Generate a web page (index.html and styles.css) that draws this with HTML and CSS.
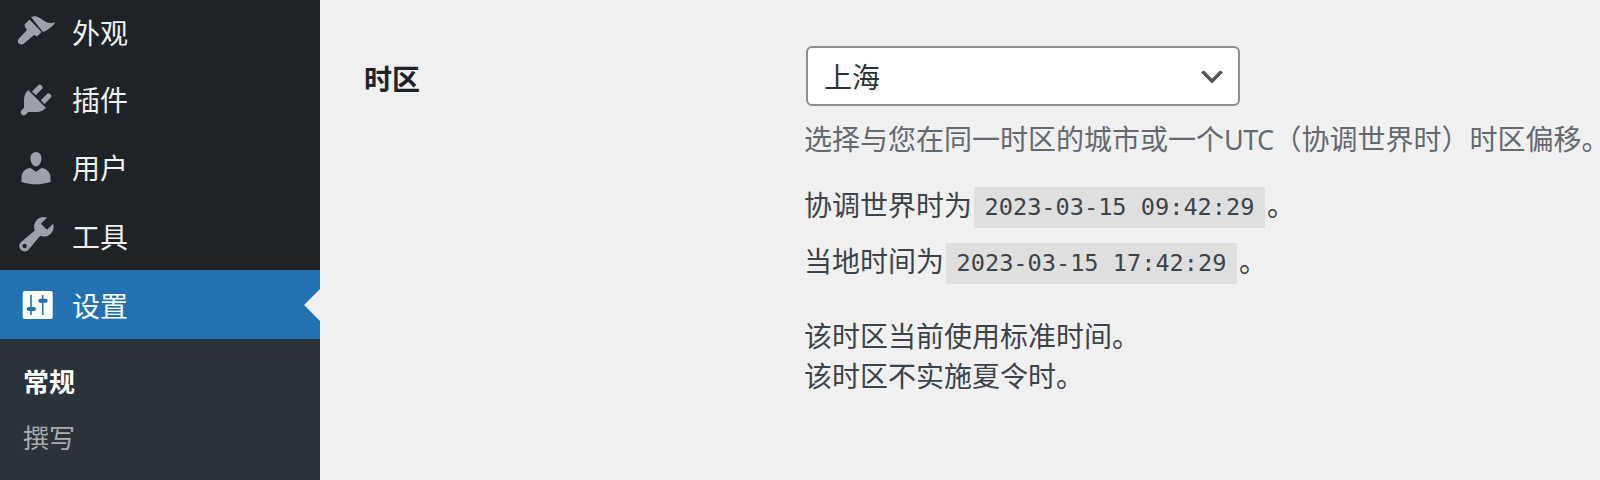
FILE: index.html
```html
<!DOCTYPE html>
<html lang="zh-CN">

<head>
    <meta charset="UTF-8">
    <title>常规设置</title>
    <link rel="stylesheet" href="styles.css">
</head>

<body>
    <div class="wrap">
        <nav class="sidebar">
            <ul class="menu">
                <li class="menu-item">
                    <svg class="menu-icon" viewBox="0 0 40 40"><path d="M15 4L19 3C22 3.6 24.5 5.6 27 7C29.5 8.6 31.500 10 34 10C36 10 38 9.700 39.500 9C38 11.500 36 13.500 34 15C32 16.500 29.500 18 27 19Z"/><path d="M13.500 6.500L25.500 19L21 23.500L18 22L8 30.500C6.500 31.800 4.500 31.800 3 30.700C1.500 29.500 1.400 27.400 2.600 26L11 17L9 14L8.500 11.500Z"/></svg>
                    <span>外观</span>
                </li>
                <li class="menu-item">
                    <svg class="menu-icon" viewBox="0 0 20 20"><path d="M13.11 4.36L9.87 7.6 8 5.73l3.24-3.24c.35-.34 1.05-.2 1.56.32.52.51.66 1.21.31 1.55zm-8 1.77l.91-1.12 9.01 9.01-1.19.84c-.71.71-2.63 1.16-3.82 1.16H6.14L4.9 17.26c-.59.59-1.54.59-2.12 0-.59-.58-.59-1.53 0-2.12l1.24-1.24v-3.88c0-1.13.4-3.19 1.09-3.89zm7.26 3.97l3.24-3.24c.34-.35 1.04-.21 1.55.31.52.51.66 1.21.31 1.55l-3.24 3.25z"/></svg>
                    <span>插件</span>
                </li>
                <li class="menu-item">
                    <svg class="menu-icon" viewBox="0 0 20 20"><path d="M10 9.25c-2.27 0-2.73-3.44-2.73-3.44C7 4.02 7.82 2 9.97 2c2.16 0 2.98 2.02 2.71 3.81 0 0-.41 3.44-2.68 3.44zm0 2.57L12.72 10c2.39 0 4.52 2.33 4.52 4.53v2.49s-3.65 1.13-7.24 1.13c-3.65 0-7.24-1.13-7.24-1.13v-2.49c0-2.25 1.94-4.48 4.47-4.48z"/></svg>
                    <span>用户</span>
                </li>
                <li class="menu-item">
                    <svg class="menu-icon" viewBox="0.5 1.54 18.6 18.6"><path d="M16.68 9.77c-1.34 1.34-3.3 1.67-4.95.99l-5.41 6.52c-.99.99-2.59.99-3.58 0s-.99-2.59 0-3.57l6.52-5.42c-.68-1.65-.35-3.61.99-4.95 1.28-1.28 3.12-1.62 4.72-1.06l-2.89 2.89 2.82 2.82 2.86-2.87c.53 1.58.18 3.39-1.08 4.65zM3.81 16.21c.4.39 1.04.39 1.43 0 .4-.4.4-1.04 0-1.43-.39-.4-1.03-.4-1.43 0-.39.39-.39 1.03 0 1.43z"/></svg>
                    <span>工具</span>
                </li>
                <li class="menu-item active">
                    <svg class="menu-icon" viewBox="0 0 40 40">
                        <rect class="icon-plate" x="6.700" y="6" width="30" height="28" rx="2"/>
                        <rect class="icon-slider" x="14.200" y="10" width="1.600" height="20"/>
                        <rect class="icon-slider" x="25.900" y="10" width="1.600" height="20"/>
                        <rect class="icon-slider" x="10.700" y="22" width="9.400" height="4" rx="2"/>
                        <rect class="icon-slider" x="22.300" y="13.700" width="9.400" height="4" rx="2"/>
                    </svg>
                    <span>设置</span>
                </li>
            </ul>
            <ul class="submenu">
                <li class="current">常规</li>
                <li>撰写</li>
            </ul>
        </nav>

        <main class="content">
            <div class="field-label">时区</div>
            <div class="field">
                <select class="tz-select">
                    <option>上海</option>
                </select>
                <p class="description">选择与您在同一时区的城市或一个<span class="latin">UTC</span>（协调世界时）时区偏移。</p>
                <p class="time-line">协调世界时为<code>2023-03-15 09:42:29</code>。</p>
                <p class="time-line">当地时间为<code>2023-03-15 17:42:29</code>。</p>
                <p class="note">该时区当前使用标准时间。<br>该时区不实施夏令时。</p>
            </div>
        </main>
    </div>
</body>

</html>
```

FILE: styles.css
```css
* {
    box-sizing: border-box;
}

html,
body {
    margin: 0;
    height: 100%;
    overflow: hidden;
}

body {
    background-color: #f0f0f1;
    color: #3c434a;
    font-family: "Noto Sans CJK SC", "Noto Sans", sans-serif;
    font-size: 28px;
}

ul {
    list-style: none;
    margin: 0;
    padding: 0;
}

p {
    margin: 0;
}

.wrap {
    display: flex;
    height: 480px;
}

.sidebar {
    width: 320px;
    flex-shrink: 0;
    background-color: #2c3338;
}

.menu {
    background-color: #1d2327;
}

.menu-item {
    display: flex;
    align-items: center;
    height: 68px;
    padding-left: 16px;
    color: #f0f0f1;
    line-height: 1;
}

.menu-item:first-child {
    height: 66px;
}

.menu-item span {
    margin-top: -2px;
}

.menu-item:nth-child(n+4) span {
    margin-top: 0;
}

.menu-icon {
    width: 40px;
    height: 40px;
    margin-right: 16px;
    fill: #9ca2a7;
}

.menu-item.active {
    position: relative;
    height: 69px;
    background-color: #2271b1;
    color: #fff;
}

.icon-plate {
    fill: #fff;
}

.icon-slider {
    fill: #2271b1;
}

.menu-item.active::after {
    content: "";
    position: absolute;
    right: 0;
    top: 50%;
    margin-top: -16px;
    border: 16px solid transparent;
    border-left-width: 0;
    border-right-color: #f0f0f1;
}

.submenu {
    padding-top: 14px;
    padding-left: 23px;
    font-size: 26px;
    line-height: 56px;
    color: #a9adb1;
}

.submenu .current {
    color: #fff;
    font-weight: 700;
}

.content {
    display: flex;
    flex: 1;
    padding-top: 46px;
    padding-left: 44px;
}

.field-label {
    width: 440px;
    padding-top: 12px;
    font-weight: 700;
    color: #1d2327;
    line-height: 40px;
}

.tz-select {
    display: block;
    width: 434px;
    height: 60px;
    margin-left: 2px;
    padding: 0 48px 0 16px;
    border: 2px solid #8c8f94;
    border-radius: 6px;
    color: #2c3338;
    font-family: inherit;
    font-size: 28px;
    appearance: none;
    background: #fff url("data:image/svg+xml;charset=US-ASCII,%3Csvg%20width%3D%2220%22%20height%3D%2220%22%20xmlns%3D%22http%3A%2F%2Fwww.w3.org%2F2000%2Fsvg%22%3E%3Cpath%20d%3D%22M5%206l5%205%205-5%202%201-7%207-7-7%202-1z%22%20fill%3D%22%23555%22%2F%3E%3C%2Fsvg%3E") no-repeat right 10px top 55%;
    background-size: 32px 32px;
}

.description {
    margin-top: 10px;
    color: #646970;
    line-height: 44px;
    white-space: nowrap;
}

.latin {
    font-family: "Noto Sans", sans-serif;
    font-size: 27px;
    letter-spacing: -.6px;
}

.time-line {
    line-height: 56px;
    white-space: nowrap;
}

.description + .time-line {
    margin-top: 14px;
}

code {
    display: inline-block;
    margin: 0 2px;
    padding: 0 10.5px;
    background-color: #dfdfe0;
    font-family: "DejaVu Sans Mono", monospace;
    font-size: 23.6px;
    line-height: 41px;
    vertical-align: 1px;
}

.note {
    margin-top: 27px;
    line-height: 40px;
    white-space: nowrap;
}
```
